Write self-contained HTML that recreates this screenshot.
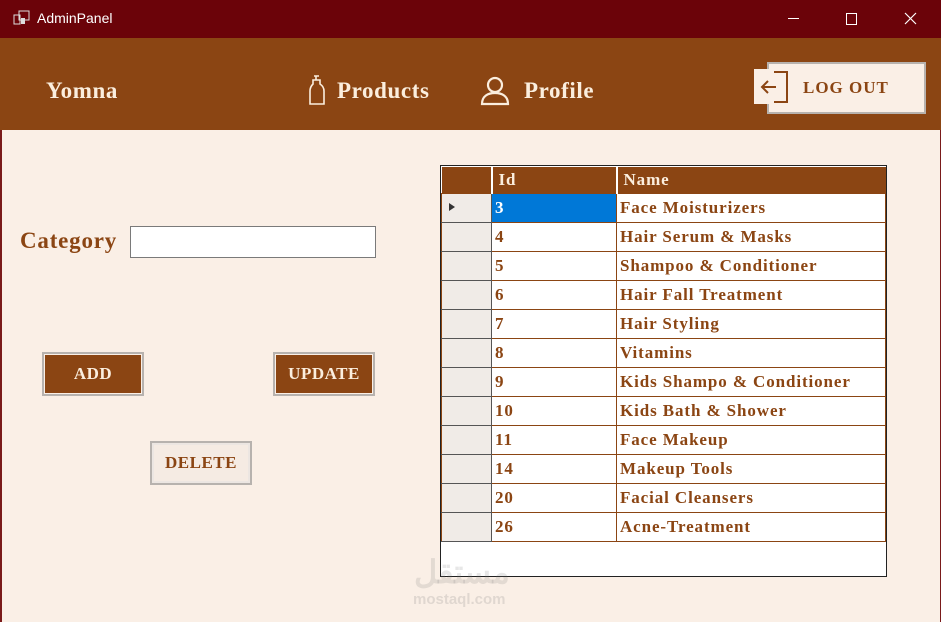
<!DOCTYPE html>
<html><head><meta charset="utf-8"><style>
*{margin:0;padding:0;box-sizing:border-box}
body{width:941px;height:622px;overflow:hidden;background:#faefe6;position:relative;font-family:"Liberation Serif",serif}
.a{position:absolute}
.tb{left:0;top:0;width:941px;height:38px;background:#6b0309;color:#fff;font-family:"Liberation Sans",sans-serif;font-size:14px}
.hd{left:0;top:38px;width:941px;height:92px;background:#8b4513;color:#fbeede;font-weight:bold;font-size:23px;letter-spacing:0.6px}
.btn{border:2px solid #b7b2ae;font-weight:bold;font-size:17px;text-align:center;line-height:40px;letter-spacing:0.5px}
table{border-collapse:collapse;font-weight:bold;font-size:17px;color:#8b4513;letter-spacing:0.9px}
td{border:1px solid #8b4513;height:29px;padding-left:3px;background:#fff}
td.rh{background:#f0ebe7;border-color:#8b4513 #555 #555 #8b4513;width:50px;padding:0}
th{background:#8b4513;color:#fbeede;text-align:left;padding-left:6px;height:26px;border-left:2px solid #fff;font-size:17px}
</style></head><body>
<div class="a" style="left:0;top:38px;width:2px;height:584px;background:#7a1a1a"></div>
<div class="a" style="right:0;top:38px;width:1px;height:584px;background:#7a1a1a"></div>
<div class="a tb">
<svg class="a" style="left:13px;top:10px" width="18" height="16"><rect x="1" y="5" width="6" height="9" fill="none" stroke="#ddd"/><rect x="6" y="1" width="10" height="9" fill="none" stroke="#ddd"/><rect x="8" y="8" width="4" height="6" fill="#ddd"/></svg>
<span class="a" style="left:37px;top:10px">AdminPanel</span>
<div class="a" style="left:788px;top:18px;width:11px;height:1px;background:#fff"></div>
<div class="a" style="left:846px;top:13px;width:11px;height:12px;border:1px solid #fff"></div>
<svg class="a" style="left:904px;top:12px" width="13" height="13"><path d="M1 1L12 12M12 1L1 12" stroke="#fff" stroke-width="1.2"/></svg>
</div>
<div class="a hd">
<span class="a" style="left:46px;top:40px">Yomna</span>
<svg class="a" style="left:307px;top:37px" width="20" height="30"><path d="M7 1h5M9 1v4M6 5h7v4c3 2 4 4 4 7v13H3V16c0-3 1-5 3-7z" fill="none" stroke="#fbeede" stroke-width="1.6"/></svg>
<span class="a" style="left:337px;top:40px">Products</span>
<svg class="a" style="left:480px;top:38px" width="30" height="30"><circle cx="15" cy="9" r="7" fill="none" stroke="#fbeede" stroke-width="2.2"/><path d="M2 28c0-8 6-11 13-11s13 3 13 11z" fill="none" stroke="#fbeede" stroke-width="2.2"/></svg>
<span class="a" style="left:524px;top:40px">Profile</span>
<div class="a" style="left:767px;top:24px;width:159px;height:52px;background:#faefe6;border:2px solid #b7b2ae"></div>
<div class="a" style="left:754px;top:31px;width:40px;height:35px;background:#faefe6"></div>
<svg class="a" style="left:758px;top:32px" width="36" height="36"><path d="M16 2h13v30H16M18 17H4M10 11l-6 6 6 6" fill="none" stroke="#8b4513" stroke-width="2"/></svg>
<span class="a" style="left:803px;top:40px;font-size:17px;color:#8b4513;letter-spacing:1px">LOG OUT</span>
</div>
<span class="a" style="left:20px;top:228px;font-size:23px;font-weight:bold;color:#8b4513;letter-spacing:0.8px">Category</span>
<div class="a" style="left:130px;top:226px;width:246px;height:32px;background:#fff;border:1px solid #7a7a7a"></div>
<div class="a btn" style="left:42px;top:352px;width:102px;height:44px;background:#8b4513;color:#fbeede;box-shadow:inset 0 0 0 1px #faefe6">ADD</div>
<div class="a btn" style="left:273px;top:352px;width:102px;height:44px;background:#8b4513;color:#fbeede;box-shadow:inset 0 0 0 1px #faefe6">UPDATE</div>
<div class="a btn" style="left:150px;top:441px;width:102px;height:44px;background:#f5ebe3;color:#8b4513;box-shadow:inset 0 0 0 2px #ece6e2">DELETE</div>
<div class="a" style="left:440px;top:165px;width:447px;height:412px;background:#fff;border:1px solid #222"></div>
<table class="a" style="left:441px;top:167px;width:445px">
<tr><th style="width:50px;border-left:0"></th><th style="width:125px">Id</th><th>Name</th></tr>
<tr><td class="rh"><svg width="12" height="12" style="margin-left:6px"><path d="M1 2l6 4-6 4z" fill="#333"/></svg></td><td style="background:#0078d7;color:#fff">3</td><td>Face Moisturizers</td></tr>
<tr><td class="rh"></td><td>4</td><td>Hair Serum &amp; Masks</td></tr>
<tr><td class="rh"></td><td>5</td><td>Shampoo &amp; Conditioner</td></tr>
<tr><td class="rh"></td><td>6</td><td>Hair Fall Treatment</td></tr>
<tr><td class="rh"></td><td>7</td><td>Hair Styling</td></tr>
<tr><td class="rh"></td><td>8</td><td>Vitamins</td></tr>
<tr><td class="rh"></td><td>9</td><td>Kids Shampo &amp; Conditioner</td></tr>
<tr><td class="rh"></td><td>10</td><td>Kids Bath &amp; Shower</td></tr>
<tr><td class="rh"></td><td>11</td><td>Face Makeup</td></tr>
<tr><td class="rh"></td><td>14</td><td>Makeup Tools</td></tr>
<tr><td class="rh"></td><td>20</td><td>Facial Cleansers</td></tr>
<tr><td class="rh"></td><td>26</td><td>Acne-Treatment</td></tr>
</table>
<span class="a" style="left:414px;top:553px;font-family:'Liberation Sans','Noto Sans CJK SC',sans-serif;font-size:32px;font-weight:bold;color:rgba(120,120,120,0.18)">مستقل</span>
<span class="a" style="left:413px;top:591px;font-family:'Liberation Sans',sans-serif;font-size:15px;font-weight:bold;color:rgba(120,120,120,0.2)">mostaql.com</span>
</body></html>
